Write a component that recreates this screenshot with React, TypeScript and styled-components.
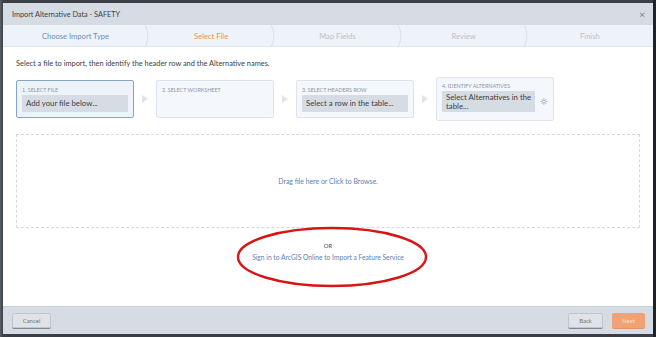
import React from "react";
import styled, { createGlobalStyle } from "styled-components";

const GlobalStyle = createGlobalStyle`
  html, body {
    margin: 0;
    padding: 0;
    background: #2c313b;
  }
  * {
    box-sizing: border-box;
  }
`;

const Frame = styled.div`
  width: 656px;
  height: 337px;
  padding: 3px 3px 3px 3px;
  background: linear-gradient(90deg, #5b5f67 0, #3a3e46 3px, #3a3e46 653px, #1d222b 653px);
  font-family: Lato, "Open Sans", sans-serif;
`;

const Dialog = styled.div`
  position: relative;
  display: flex;
  flex-direction: column;
  width: 650px;
  height: 331px;
  background: #ffffff;
  overflow: hidden;
`;

const Header = styled.div`
  display: flex;
  align-items: center;
  justify-content: space-between;
  height: 22px;
  padding: 0 8px 0 9px;
  background: #d6dce4;
  color: #3b3f46;
  font-size: 7.3px;
`;

const Close = styled.span`
  color: #8a9099;
  font-size: 10px;
  font-weight: 700;
  line-height: 1;
`;

const Steps = styled.div`
  display: flex;
  height: 22px;
  background: #eef3fa;
  border-bottom: 1px solid #dfe5ee;
`;

const Step = styled.div<{ $state: "done" | "active" | "todo"; $first?: boolean }>`
  position: relative;
  display: flex;
  align-items: center;
  justify-content: center;
  ${({ $first }) => ($first ? "width: 145px;" : "flex: 1;")}
  font-size: 7.6px;
  color: ${({ $state }) =>
    $state === "active" ? "#ef8c4f" : $state === "done" ? "#6d8db3" : "#b9c1cc"};
`;

const Chevron = styled.svg`
  position: absolute;
  right: -4px;
  top: 0;
  width: 8px;
  height: 22px;
`;

const Body = styled.div`
  flex: 1;
  display: flex;
  flex-direction: column;
  padding: 12px 13px 0 13px;
`;

const Intro = styled.p`
  margin: 0 0 9px 0;
  font-size: 7.4px;
  color: #3a3e45;
`;

const Pipeline = styled.div`
  display: flex;
  align-items: center;
  height: 44px;
`;

const Card = styled.div<{ $active?: boolean; $tall?: boolean }>`
  display: flex;
  flex-direction: column;
  width: 118px;
  height: ${({ $tall }) => ($tall ? "44px" : "38px")};
  padding: ${({ $tall }) => ($tall ? "5px 5px" : "6px 5px")};
  background: ${({ $active }) => ($active ? "#eef3fa" : "#f4f7fb")};
  border: 1px solid ${({ $active }) => ($active ? "#86a3c8" : "#dde4ee")};
  border-radius: 2px;
`;

const CardLabel = styled.div`
  font-size: 5.4px;
  line-height: 6px;
  color: #8b95a3;
  text-transform: uppercase;
  margin-bottom: 2px;
`;

const FieldRow = styled.div`
  display: flex;
  align-items: center;
  gap: 5px;
`;

const Field = styled.div`
  flex: 1;
  min-height: 17px;
  padding: 2px 4px;
  display: flex;
  align-items: center;
  background: #d6dce4;
  border-radius: 1px;
  font-size: 7.8px;
  line-height: 8.5px;
  color: #3a3e45;
  white-space: nowrap;
`;

const Arrow = styled.div`
  width: 22px;
  display: flex;
  justify-content: center;
  &::before {
    content: "";
    border-left: 6px solid #dfe4eb;
    border-top: 4px solid transparent;
    border-bottom: 4px solid transparent;
  }
`;

const DropZone = styled.div`
  height: 94px;
  margin-top: 13px;
  border: 1px dashed #d5d9df;
  display: flex;
  align-items: center;
  justify-content: center;
  font-size: 6.9px;
  color: #5b7fb3;
`;

const Alternative = styled.div`
  position: relative;
  display: flex;
  flex-direction: column;
  align-items: center;
  margin-top: 14px;
  gap: 4px;
`;

const Or = styled.div`
  font-size: 5.8px;
  color: #3a3e45;
`;

const SignIn = styled.div`
  font-size: 6.7px;
  color: #5b7fb3;
`;

const Ring = styled.svg`
  position: absolute;
  left: 219px;
  top: -16px;
  width: 194px;
  height: 62px;
  pointer-events: none;
`;

const Footer = styled.div`
  display: flex;
  align-items: center;
  height: 28px;
  padding: 0 8px 0 9px;
  background: #d6dce4;
  border-top: 1px solid #c9d0d9;
  gap: 9px;
`;

const Button = styled.button<{ $primary?: boolean; $width: number }>`
  height: 15px;
  padding: 0;
  width: ${({ $width }) => $width}px;
  border: none;
  border-radius: 2px;
  font-family: inherit;
  font-size: 6px;
  color: ${({ $primary }) => ($primary ? "#fbe2d3" : "#6f7680")};
  background: ${({ $primary }) => ($primary ? "#f0a274" : "#dfe3e8")};
  box-shadow: ${({ $primary }) =>
    $primary ? "0 1px 0 #e5946a" : "inset 0 0 0 1px #bfc6cf, 0 1px 0 #7f8690"};
`;

const Spacer = styled.div`
  flex: 1;
`;

const steps: { label: string; state: "done" | "active" | "todo" }[] = [
  { label: "Choose Import Type", state: "done" },
  { label: "Select File", state: "active" },
  { label: "Map Fields", state: "todo" },
  { label: "Review", state: "todo" },
  { label: "Finish", state: "todo" },
];

const Gear = () => (
  <svg width="9" height="9" viewBox="0 0 24 24" fill="none" stroke="#a3b7d2" strokeWidth="3">
    <circle cx="12" cy="12" r="4.5" />
    <path d="M12 1.5v4.5M12 18v4.5M1.5 12h4.5M18 12h4.5M4.6 4.6l3.2 3.2M16.2 16.2l3.2 3.2M4.6 19.4l3.2-3.2M16.2 7.8l3.2-3.2" />
  </svg>
);

export default function App() {
  return (
    <>
      <GlobalStyle />
      <Frame>
        <Dialog>
          <Header>
            <span>Import Alternative Data - SAFETY</span>
            <Close>×</Close>
          </Header>
          <Steps>
            {steps.map((s, i) => (
              <Step key={s.label} $state={s.state} $first={i === 0}>
                {s.label}
                {i < steps.length - 1 && (
                  <Chevron viewBox="0 0 8 22">
                    <path d="M1 0 Q7 11 1 22" fill="none" stroke="#d3dbe6" strokeWidth="0.8" />
                  </Chevron>
                )}
              </Step>
            ))}
          </Steps>
          <Body>
            <Intro>Select a file to import, then identify the header row and the Alternative names.</Intro>
            <Pipeline>
              <Card $active>
                <CardLabel>1. Select File</CardLabel>
                <Field>Add your file below...</Field>
              </Card>
              <Arrow />
              <Card>
                <CardLabel>2. Select Worksheet</CardLabel>
              </Card>
              <Arrow />
              <Card>
                <CardLabel>3. Select Headers Row</CardLabel>
                <Field>Select a row in the table...</Field>
              </Card>
              <Arrow />
              <Card $tall>
                <CardLabel>4. Identify Alternatives</CardLabel>
                <FieldRow>
                  <Field>
                    Select Alternatives in the
                    <br />
                    table...
                  </Field>
                  <Gear />
                </FieldRow>
              </Card>
            </Pipeline>
            <DropZone>Drag file here or Click to Browse.</DropZone>
            <Alternative>
              <Or>OR</Or>
              <SignIn>Sign in to ArcGIS Online to Import a Feature Service</SignIn>
              <Ring viewBox="0 0 194 62">
                <ellipse cx="97" cy="31" rx="94" ry="29" fill="none" stroke="#d81414" strokeWidth="2.4" />
              </Ring>
            </Alternative>
          </Body>
          <Footer>
            <Button $width={39}>Cancel</Button>
            <Spacer />
            <Button $width={35}>Back</Button>
            <Button $primary $width={33}>Next</Button>
          </Footer>
        </Dialog>
      </Frame>
    </>
  );
}
